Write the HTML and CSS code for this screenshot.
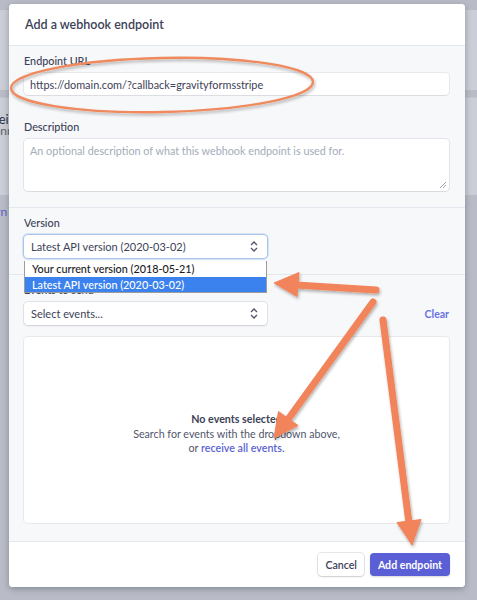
FILE: index.html
```html
<!DOCTYPE html>
<html lang="en">
<head>
    <meta charset="UTF-8">
    <meta name="viewport" content="width=device-width, initial-scale=1.0">
    <title>Add a webhook endpoint</title>
    <link rel="stylesheet" href="styles.css">
</head>
<body>
    <!-- Dimmed page behind the modal -->
    <div class="page">
        <div class="panel panel-top"></div>
        <div class="panel panel-mid">
            <p class="panel-title">Receive events</p>
            <p class="panel-sub">- Connected accounts</p>
        </div>
        <a class="page-link">Learn more about webhooks</a>
    </div>

    <!-- Modal -->
    <div class="modal">
        <div class="modal-header">
            <h2 class="modal-title">Add a webhook endpoint</h2>
        </div>

        <div class="modal-body">
            <div class="section">
                <label class="label">Endpoint URL</label>
                <div class="input">https://domain.com/?callback=gravityformsstripe</div>

                <label class="label label-gap">Description</label>
                <div class="textarea">
                    <span class="placeholder">An optional description of what this webhook endpoint is used for.</span>
                    <svg class="grip" width="8" height="8" viewBox="0 0 8 8">
                        <path d="M7 1 L1 7 M7 4 L4 7" stroke="#9aa0ab" stroke-width="1"/>
                    </svg>
                </div>
            </div>

            <div class="section section-version">
                <label class="label">Version</label>
                <div class="select select-focus">
                    <span>Latest API version (2020-03-02)</span>
                    <svg class="chevrons" width="8" height="11" viewBox="0 0 8 11">
                        <path d="M1 4 L4 1 L7 4 M1 7 L4 10 L7 7" fill="none" stroke="#4f566b" stroke-width="1.3"/>
                    </svg>
                </div>
                <ul class="options">
                    <li class="option">Your current version (2018-05-21)</li>
                    <li class="option option-active">Latest API version (2020-03-02)</li>
                </ul>
            </div>

            <div class="section section-events">
                <label class="label">Events to send</label>
                <div class="row">
                    <div class="select">
                        <span>Select events...</span>
                        <svg class="chevrons" width="8" height="11" viewBox="0 0 8 11">
                            <path d="M1 4 L4 1 L7 4 M1 7 L4 10 L7 7" fill="none" stroke="#4f566b" stroke-width="1.3"/>
                        </svg>
                    </div>
                    <a class="clear">Clear</a>
                </div>
                <div class="events-box">
                    <p class="empty-title">No events selected</p>
                    <p class="empty-text">Search for events with the dropdown above,</p>
                    <p class="empty-text">or <a class="link">receive all events.</a></p>
                </div>
            </div>
        </div>

        <div class="modal-footer">
            <button class="btn btn-cancel">Cancel</button>
            <button class="btn btn-primary">Add endpoint</button>
        </div>
    </div>

    <!-- Hand-drawn annotations -->
    <svg class="annotations" width="477" height="600" viewBox="0 0 477 600">
        <defs>
            <filter id="shadow" x="-10%" y="-10%" width="120%" height="120%">
                <feDropShadow dx="1" dy="2" stdDeviation="1.5" flood-color="#000" flood-opacity="0.3"/>
            </filter>
        </defs>
        <g filter="url(#shadow)">
            <ellipse cx="162" cy="85" rx="151" ry="27" transform="rotate(-1.2 162 85)"
                     fill="none" stroke="#ef8a5e" stroke-width="2.4"/>
        </g>
        <g filter="url(#shadow)" fill="#f2845b" stroke="#f2845b">
            <line x1="376" y1="290" x2="296" y2="285" stroke-width="7" stroke-linecap="round"/>
            <polygon points="274,283 299,272.5 297,296.5" stroke-width="1" stroke-linejoin="round"/>

            <line x1="373" y1="302" x2="289" y2="418" stroke-width="7" stroke-linecap="round"/>
            <polygon points="274,438 298,425.5 278.5,411.5" stroke-width="1" stroke-linejoin="round"/>

            <line x1="383" y1="320" x2="409" y2="523" stroke-width="7" stroke-linecap="round"/>
            <polygon points="412,545 421,519.5 397,522.5" stroke-width="1" stroke-linejoin="round"/>
        </g>
    </svg>
</body>
</html>
```

FILE: styles.css
```css
/* Base */
* {
    box-sizing: border-box;
}

body {
    margin: 0;
    width: 477px;
    height: 600px;
    overflow: hidden;
    position: relative;
    background: #b9bcc7;
    font-family: Lato, "Open Sans", sans-serif;
    color: #3c4257;
}

p {
    margin: 0;
}

/* Dimmed page behind */
.page {
    padding-top: 10px;
}

.panel {
    background: #cbced6;
}

.panel-top {
    height: 80px;
    margin-bottom: 7px;
}

.panel-mid {
    height: 98px;
    padding: 16px 0 0 0;
    margin-left: -22px;
    border-top: 1px solid #c2c5ce;
}

.panel-title {
    font-size: 13px;
    color: #2d3140;
    line-height: 10px;
}

.panel-sub {
    font-size: 12px;
    color: #5c6272;
    line-height: 14px;
}

.page-link {
    display: block;
    margin: 9px 0 0 -22px;
    font-size: 12px;
    color: #5a61c9;
}

/* Modal */
.modal {
    position: absolute;
    left: 9px;
    top: 4px;
    width: 456px;
    height: 583px;
    display: flex;
    flex-direction: column;
    background: #f7f8fa;
    border-radius: 4px;
    overflow: hidden;
    box-shadow: 0 2px 6px rgba(40, 45, 60, 0.35);
}

.modal-header {
    height: 42px;
    display: flex;
    align-items: center;
    padding: 0 16px;
    background: #fff;
    border-bottom: 1px solid #e3e8ee;
}

.modal-title {
    margin: 0;
    font-size: 12.5px;
    font-weight: 600;
    color: #3c4257;
}

.modal-body {
    flex: 1;
    display: flex;
    flex-direction: column;
}

.section {
    padding: 7px 16px 16px 15px;
    border-bottom: 1px solid #e3e8ee;
}

.section-version {
    position: relative;
    padding-top: 7px;
}

.section-events {
    flex: 1;
    display: flex;
    flex-direction: column;
    padding-bottom: 18px;
}

.label {
    display: block;
    font-size: 10.8px;
    font-weight: 500;
    line-height: 16px;
    margin-bottom: 4px;
    color: #3c4257;
}

.label-gap {
    margin-top: 24px;
}

/* Fields */
.input {
    height: 22px;
    padding: 0 6px;
    display: flex;
    align-items: center;
    font-size: 10.9px;
    background: #fff;
    border-radius: 4px;
    box-shadow: 0 0 0 1px rgba(60, 66, 87, 0.08), 0 1px 1px rgba(0, 0, 0, 0.06);
}

.textarea {
    position: relative;
    height: 52px;
    padding: 5px 6px;
    font-size: 10.8px;
    background: #fff;
    border-radius: 4px;
    box-shadow: 0 0 0 1px rgba(60, 66, 87, 0.1), 0 1px 1px rgba(0, 0, 0, 0.05);
}

.placeholder {
    color: #a3acb9;
}

.grip {
    position: absolute;
    right: 2px;
    bottom: 2px;
}

.select {
    width: 243px;
    height: 23px;
    padding: 0 9px 0 7px;
    display: flex;
    align-items: center;
    justify-content: space-between;
    font-size: 11px;
    background: #fff;
    border-radius: 4px;
    box-shadow: 0 0 0 1px rgba(60, 66, 87, 0.1), 0 1px 2px rgba(0, 0, 0, 0.1);
}

.select-focus {
    box-shadow: 0 0 0 1px #a9c6ec, 0 0 0 2px rgba(122, 167, 226, 0.25);
}

/* Open dropdown list */
.options {
    position: absolute;
    left: 15px;
    top: 53px;
    width: 243px;
    margin: 0;
    padding: 0;
    list-style: none;
    background: #fff;
    border: 1px solid #9c9c9c;
    border-top: none;
    z-index: 2;
}

.option {
    height: 15.5px;
    line-height: 15.5px;
    padding: 0 7px;
    font-size: 10.8px;
    font-weight: 500;
    color: #1b1b1b;
}

.option-active {
    background: #3b82ee;
    color: #fff;
}

.row {
    display: flex;
    align-items: center;
    justify-content: space-between;
}

.clear {
    font-size: 10.5px;
    font-weight: 700;
    color: #6772e5;
}

.events-box {
    flex: 1;
    margin-top: 12px;
    display: flex;
    flex-direction: column;
    align-items: center;
    justify-content: center;
    padding-top: 8px;
    background: #fff;
    border-radius: 4px;
    box-shadow: 0 0 0 1px rgba(60, 66, 87, 0.08);
    font-size: 10.7px;
    line-height: 14.5px;
}

.empty-title {
    font-weight: 700;
    color: #3c4257;
}

.empty-text {
    color: #4f566b;
}

.link {
    color: #5b63d3;
    font-weight: 600;
}

/* Footer */
.modal-footer {
    height: 45px;
    display: flex;
    justify-content: flex-end;
    align-items: center;
    gap: 6px;
    padding: 0 15px 0 0;
    background: #fff;
}

.btn {
    height: 23px;
    padding: 0 7px;
    border: none;
    border-radius: 4px;
    font-family: inherit;
    font-size: 10.6px;
    font-weight: 700;
}

.btn-cancel {
    font-weight: 600;
    background: #fff;
    color: #3c4257;
    box-shadow: 0 0 0 1px rgba(60, 66, 87, 0.12), 0 1px 2px rgba(0, 0, 0, 0.12);
}

.btn-primary {
    padding: 0 8px;
    background: #5a5fd6;
    color: #fff;
    box-shadow: 0 1px 2px rgba(0, 0, 0, 0.15);
}

/* Annotation layer */
.annotations {
    position: absolute;
    left: 0;
    top: 0;
    pointer-events: none;
    z-index: 5;
}
```
